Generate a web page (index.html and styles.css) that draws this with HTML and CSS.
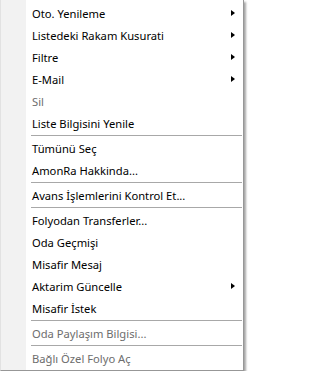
FILE: index.html
```html
<!DOCTYPE html>
<html>
<head>
<meta charset="utf-8">
<link rel="stylesheet" href="styles.css">
</head>
<body>
<div class="menu">
  <div class="item"><span class="label">Oto. Yenileme</span><span class="arrow"></span></div>
  <div class="item"><span class="label">Listedeki Rakam Kusurati</span><span class="arrow"></span></div>
  <div class="item"><span class="label">Filtre</span><span class="arrow"></span></div>
  <div class="item"><span class="label">E-Mail</span><span class="arrow"></span></div>
  <div class="item disabled"><span class="label">Sil</span></div>
  <div class="item"><span class="label">Liste Bilgisini Yenile</span></div>
  <div class="sep"></div>
  <div class="item"><span class="label">Tümünü Seç</span></div>
  <div class="item"><span class="label">AmonRa Hakkinda...</span></div>
  <div class="sep"></div>
  <div class="item"><span class="label">Avans İşlemlerini Kontrol Et...</span></div>
  <div class="sep"></div>
  <div class="item"><span class="label">Folyodan Transferler...</span></div>
  <div class="item"><span class="label">Oda Geçmişi</span></div>
  <div class="item"><span class="label">Misafir Mesaj</span></div>
  <div class="item"><span class="label">Aktarim Güncelle</span><span class="arrow"></span></div>
  <div class="item"><span class="label">Misafir İstek</span></div>
  <div class="sep"></div>
  <div class="item disabled"><span class="label">Oda Paylaşım Bilgisi...</span></div>
  <div class="sep"></div>
  <div class="item disabled"><span class="label">Bağlı Özel Folyo Aç</span></div>
</div>
</body>
</html>
```
FILE: styles.css
```css
html, body {
  margin: 0;
  padding: 0;
  background: #ffffff;
}
.menu {
  width: 244px;
  box-sizing: border-box;
  display: flex;
  flex-direction: column;
  padding: 2px 0 1px 0;
  border-left: 1px solid #e2e2e2;
  border-right: 1px solid #979797;
  border-bottom: 1px solid #979797;
  background: linear-gradient(to right, #f2f2f2 25px, #ffffff 25px);
  box-shadow: 2px 2px 2px rgba(0, 0, 0, 0.35);
  font-family: "Noto Sans", "Open Sans", sans-serif;
  font-size: 11.2px;
  color: #000000;
}
.item {
  height: 22px;
  display: flex;
  align-items: center;
  justify-content: space-between;
  padding-left: 31px;
  padding-right: 8px;
}
.item.disabled {
  color: #6d6d6d;
}
.arrow {
  width: 0;
  height: 0;
  border-top: 3.5px solid transparent;
  border-bottom: 3.5px solid transparent;
  border-left: 4px solid #000000;
}
.sep {
  height: 3px;
  display: flex;
  align-items: center;
  margin-left: 30px;
  margin-right: 1px;
}
.sep::before {
  content: "";
  flex: 1;
  height: 1px;
  background: #a8a8a8;
}
```
